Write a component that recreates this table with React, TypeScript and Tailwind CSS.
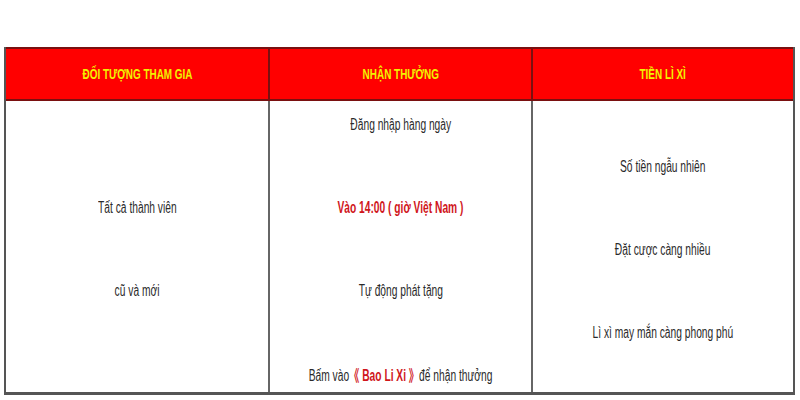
const font = { fontFamily: '"Liberation Sans", Arial, sans-serif' };
const cjk = { fontFamily: '"Noto Sans CJK SC", sans-serif' };

const headers = ['ĐỐI TƯỢNG THAM GIA', 'NHẬN THƯỞNG', 'TIỀN LÌ XÌ'];

const Line = ({ children, className = '' }: { children: React.ReactNode; className?: string }) => (
  <div className="h-5 leading-5 text-center whitespace-nowrap">
    <span className={`inline-block scale-x-[0.64] text-[16px] text-[#2a2a2a] ${className}`}>{children}</span>
  </div>
);

export default function App() {
  return (
    <div className="w-[800px] h-[400px] bg-white pt-[47px] pl-[4px]" style={font}>
      <div className="w-[791px] h-[348px] grid grid-cols-3 grid-rows-[54px_1fr] border-l-2 border-r-2 border-b-[3px] border-[#555]">
        {headers.map((h, i) => (
          <div
            key={h}
            className={`bg-[#ff0000] border-t-2 border-b-2 border-[#7a1010] flex items-center justify-center ${i > 0 ? 'border-l-2' : ''}`}
          >
            <span className="inline-block scale-x-[0.71] text-[14px] font-bold text-[#f2f200] whitespace-nowrap">{h}</span>
          </div>
        ))}
        <div className="flex flex-col items-center justify-center gap-[63px] pt-[6px]">
          <Line>Tất cả thành viên</Line>
          <Line>cũ và mới</Line>
        </div>
        <div className="border-l-2 border-[#666] flex flex-col items-center justify-center gap-[63px] pt-[6px]">
          <Line>Đăng nhập hàng ngày</Line>
          <Line className="font-bold !text-[#d0161b]">Vào 14:00 ( giờ Việt Nam )</Line>
          <Line>Tự động phát tặng</Line>
          <Line>
            Bấm vào
            <span className="font-bold text-[#d0161b]">
              <span style={cjk} className="text-[16px]">《</span> Bao Li Xi{' '}
              <span style={cjk} className="text-[16px]">》</span>
            </span>
            để nhận thưởng
          </Line>
        </div>
        <div className="border-l-2 border-[#666] flex flex-col items-center justify-center gap-[63px] pt-[6px]">
          <Line>Số tiền ngẫu nhiên</Line>
          <Line>Đặt cược càng nhiều</Line>
          <Line>Lì xì may mắn càng phong phú</Line>
        </div>
      </div>
    </div>
  );
}
